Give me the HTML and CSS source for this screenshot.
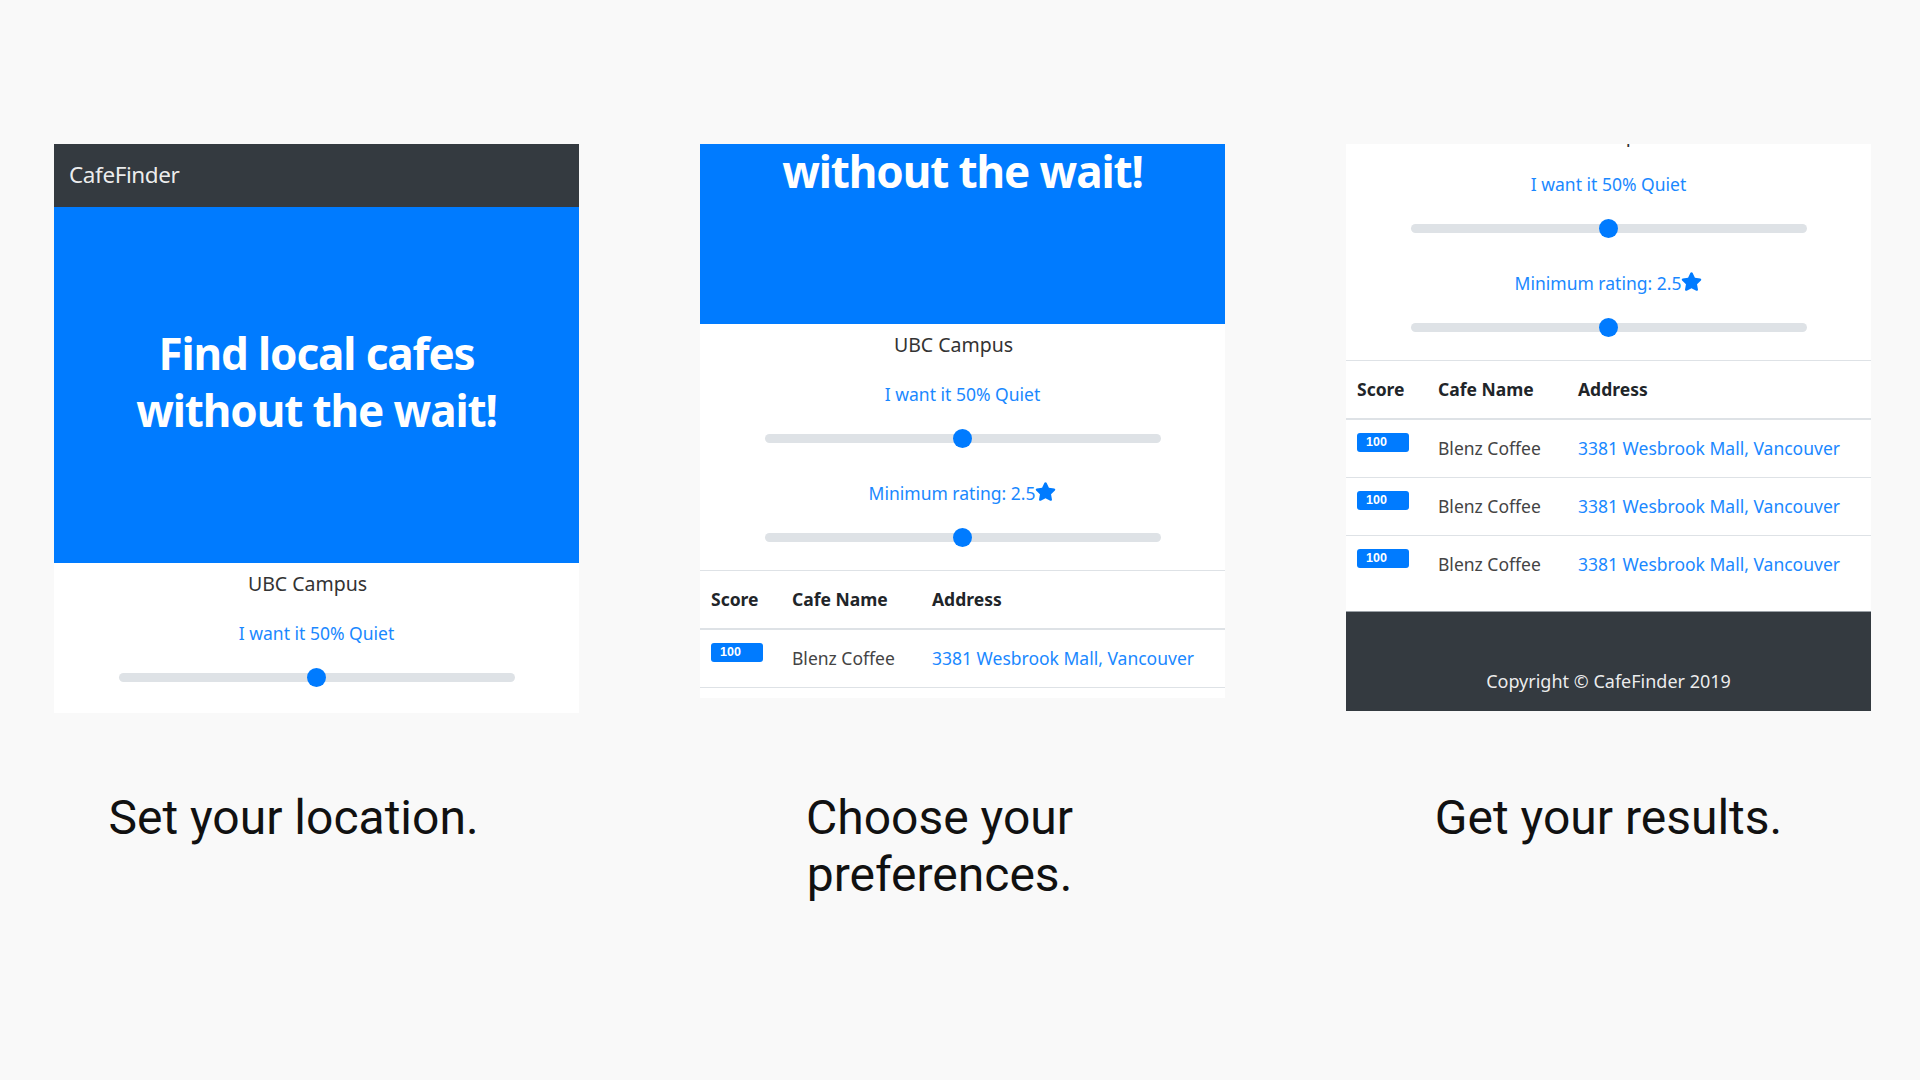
FILE: index.html
```html
<!DOCTYPE html>
<html lang="en">
<head>
<meta charset="utf-8">
<title>CafeFinder — How it works</title>
<link rel="stylesheet" href="styles.css">
</head>
<body>
<main class="slides">
  <section class="step">
    <div class="screen screen--one">
      <div class="app">
        <nav class="navbar"><span class="brand">CafeFinder</span></nav>
        <header class="hero"><h1 class="hero-title">Find local cafes<br>without the wait!</h1></header>
        <div class="filters">
          <p class="location">UBC Campus</p>
          <p class="filter-label">I want it 50% Quiet</p>
          <input class="range" type="range" min="0" max="100" value="50">
          <p class="filter-label filter-label--rating">Minimum rating: 2.5<svg class="star" viewBox="0 0 576 512" aria-hidden="true"><path d="M259.3 17.8L194 150.2 47.9 171.5c-26.2 3.8-36.7 36.1-17.7 54.6l105.7 103-25 145.5c-4.5 26.3 23.2 46 46.4 33.7L288 439.6l130.7 68.7c23.2 12.2 50.9-7.4 46.4-33.7l-25-145.5 105.7-103c19-18.5 8.5-50.8-17.7-54.6L382 150.2 316.7 17.8c-11.7-23.6-45.6-23.9-57.4 0z"/></svg></p>
          <input class="range" type="range" min="0" max="5" step="0.5" value="2.5">
        </div>
        <table class="results">
          <thead><tr><th class="col-score">Score</th><th class="col-name">Cafe Name</th><th>Address</th></tr></thead>
          <tbody>
            <tr><td><span class="badge">100</span></td><td>Blenz Coffee</td><td><a href="#">3381 Wesbrook Mall, Vancouver</a></td></tr>
            <tr><td><span class="badge">100</span></td><td>Blenz Coffee</td><td><a href="#">3381 Wesbrook Mall, Vancouver</a></td></tr>
            <tr><td><span class="badge">100</span></td><td>Blenz Coffee</td><td><a href="#">3381 Wesbrook Mall, Vancouver</a></td></tr>
          </tbody>
        </table>
        <footer class="footer">Copyright © CafeFinder 2019</footer>
      </div>
    </div>
    <p class="caption">Set your location.</p>
  </section>

  <section class="step">
    <div class="screen screen--two">
      <div class="app">
        <nav class="navbar"><span class="brand">CafeFinder</span></nav>
        <header class="hero"><h1 class="hero-title">Find local cafes<br>without the wait!</h1></header>
        <div class="filters">
          <p class="location">UBC Campus</p>
          <p class="filter-label">I want it 50% Quiet</p>
          <input class="range" type="range" min="0" max="100" value="50">
          <p class="filter-label filter-label--rating">Minimum rating: 2.5<svg class="star" viewBox="0 0 576 512" aria-hidden="true"><path d="M259.3 17.8L194 150.2 47.9 171.5c-26.2 3.8-36.7 36.1-17.7 54.6l105.7 103-25 145.5c-4.5 26.3 23.2 46 46.4 33.7L288 439.6l130.7 68.7c23.2 12.2 50.9-7.4 46.4-33.700l-25-145.5 105.7-103c19-18.5 8.5-50.8-17.7-54.6L382 150.2 316.7 17.8c-11.7-23.6-45.6-23.9-57.4 0z"/></svg></p>
          <input class="range" type="range" min="0" max="5" step="0.5" value="2.5">
        </div>
        <table class="results">
          <thead><tr><th class="col-score">Score</th><th class="col-name">Cafe Name</th><th>Address</th></tr></thead>
          <tbody>
            <tr><td><span class="badge">100</span></td><td>Blenz Coffee</td><td><a href="#">3381 Wesbrook Mall, Vancouver</a></td></tr>
            <tr><td><span class="badge">100</span></td><td>Blenz Coffee</td><td><a href="#">3381 Wesbrook Mall, Vancouver</a></td></tr>
            <tr><td><span class="badge">100</span></td><td>Blenz Coffee</td><td><a href="#">3381 Wesbrook Mall, Vancouver</a></td></tr>
          </tbody>
        </table>
        <footer class="footer">Copyright © CafeFinder 2019</footer>
      </div>
    </div>
    <p class="caption">Choose your preferences.</p>
  </section>

  <section class="step">
    <div class="screen screen--three">
      <div class="app">
        <nav class="navbar"><span class="brand">CafeFinder</span></nav>
        <header class="hero"><h1 class="hero-title">Find local cafes<br>without the wait!</h1></header>
        <div class="filters">
          <p class="location">UBC Campus</p>
          <p class="filter-label">I want it 50% Quiet</p>
          <input class="range" type="range" min="0" max="100" value="50">
          <p class="filter-label filter-label--rating">Minimum rating: 2.5<svg class="star" viewBox="0 0 576 512" aria-hidden="true"><path d="M259.3 17.8L194 150.2 47.9 171.5c-26.2 3.8-36.7 36.1-17.7 54.6l105.7 103-25 145.5c-4.5 26.3 23.2 46 46.4 33.7L288 439.6l130.7 68.7c23.2 12.2 50.9-7.4 46.4-33.7l-25-145.5 105.7-103c19-18.5 8.5-50.8-17.7-54.6L382 150.2 316.7 17.8c-11.7-23.6-45.6-23.9-57.4 0z"/></svg></p>
          <input class="range" type="range" min="0" max="5" step="0.5" value="2.5">
        </div>
        <table class="results">
          <thead><tr><th class="col-score">Score</th><th class="col-name">Cafe Name</th><th>Address</th></tr></thead>
          <tbody>
            <tr><td><span class="badge">100</span></td><td>Blenz Coffee</td><td><a href="#">3381 Wesbrook Mall, Vancouver</a></td></tr>
            <tr><td><span class="badge">100</span></td><td>Blenz Coffee</td><td><a href="#">3381 Wesbrook Mall, Vancouver</a></td></tr>
            <tr><td><span class="badge">100</span></td><td>Blenz Coffee</td><td><a href="#">3381 Wesbrook Mall, Vancouver</a></td></tr>
          </tbody>
        </table>
        <footer class="footer">Copyright © CafeFinder 2019</footer>
      </div>
    </div>
    <p class="caption caption--centered">Get your results.</p>
  </section>
</main>
</body>
</html>
```

FILE: styles.css
```css
* { box-sizing: border-box; }

html, body {
  margin: 0;
  height: 100%;
}

body {
  background: #f9f9f9;
  font-family: "Noto Sans", "Open Sans", sans-serif;
  color: #212529;
  overflow: hidden;
}

.slides {
  display: grid;
  grid-template-columns: 525px 525px 525px;
  column-gap: 121px;
  padding: 144px 0 0 54px;
}

.step {
  display: flex;
  flex-direction: column;
}

/* Each screen is a window onto the same app page, scrolled differently */
.screen {
  background: #fff;
  overflow: hidden;
}
.screen--one { height: 569px; }
.screen--two { height: 554px; }
.screen--three { height: 567px; }

.screen--two .app { margin-top: -239px; }
.screen--three .app { margin-top: -449px; }

.app {
  display: flex;
  flex-direction: column;
}

.navbar {
  height: 63px;
  background: #343a40;
  display: flex;
  align-items: center;
  padding-left: 15px;
  padding-bottom: 2px;
}

.brand {
  color: rgba(255, 255, 255, 0.92);
  font-size: 22.5px;
  letter-spacing: -0.4px;
}

.hero {
  height: 356px;
  background: #007bff;
  display: flex;
  align-items: center;
  justify-content: center;
  padding-bottom: 6px;
}

.hero-title {
  margin: 0;
  color: #fff;
  text-align: center;
  font-size: 44px;
  line-height: 57px;
  font-weight: 700;
  letter-spacing: -1.1px;
}

.filters {
  display: flex;
  flex-direction: column;
  align-items: center;
  padding-top: 7px;
  padding-bottom: 23px;
}

.location {
  margin: 0;
  font-size: 19.5px;
  line-height: 28px;
  color: #333;
  padding-right: 18px;
}

.filter-label {
  margin: 21px 0 0;
  font-size: 17.5px;
  line-height: 28px;
  color: #1a88ff;
  display: flex;
  align-items: center;
}

.filter-label--rating {
  margin-top: 31px;
}

.star {
  width: 21px;
  height: 19px;
  fill: #007bff;
  margin-top: -4px;
}

.range {
  -webkit-appearance: none;
  appearance: none;
  width: 396px;
  height: 19px;
  margin: 21px 0 0;
  background: transparent;
}
.range::-webkit-slider-runnable-track {
  height: 9px;
  border-radius: 5px;
  background: #dee2e6;
}
.range::-webkit-slider-thumb {
  -webkit-appearance: none;
  appearance: none;
  width: 19px;
  height: 19px;
  border-radius: 50%;
  background: #007bff;
  margin-top: -5px;
  border: none;
}

.results {
  width: 100%;
  border-collapse: collapse;
  font-size: 17.5px;
}

.results th,
.results td {
  text-align: left;
  padding: 14px 11px;
  line-height: 29px;
  border-top: 1px solid #dee2e6;
  vertical-align: top;
}

.results th {
  font-weight: 700;
  color: #212529;
}

.results thead th {
  border-bottom: 2px solid #dee2e6;
}

.results td {
  color: #444;
}

.col-score { width: 81px; }
.col-name { width: 140px; }

.results a {
  color: #1a88ff;
  text-decoration: none;
}

.badge {
  display: inline-block;
  width: 52px;
  height: 19px;
  margin-top: -1px;
  padding-left: 9px;
  border-radius: 3px;
  background: #007bff;
  color: #fff;
  font-family: "Liberation Sans", Arial, sans-serif;
  font-weight: 700;
  font-size: 12.5px;
  line-height: 19px;
  vertical-align: top;
}

.footer {
  margin-top: 18px;
  height: 140px;
  background: #343a40;
  border-top: 1px solid #9aa0a6;
  color: rgba(255, 255, 255, 0.92);
  font-size: 18px;
  text-align: center;
  padding-top: 57px;
}

.caption {
  margin: 76px 0 0;
  padding-right: 46px;
  font-family: Roboto, "Noto Sans", sans-serif;
  font-size: 48px;
  line-height: 57px;
  color: #111;
  text-align: center;
}

.step:nth-child(2) .caption { margin-top: 91px; }
.step:nth-child(3) .caption { margin-top: 78px; }

.caption--centered {
  padding-right: 0;
}
```
